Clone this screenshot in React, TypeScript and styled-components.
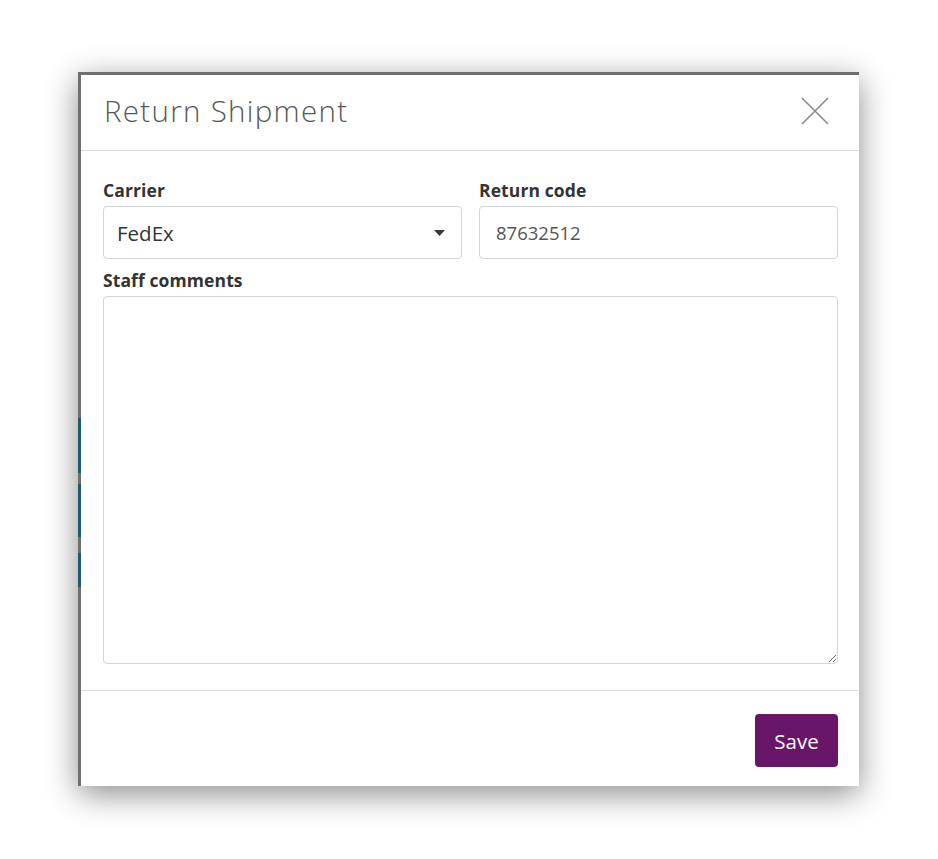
import React from "react";
import styled, { createGlobalStyle } from "styled-components";

const GlobalStyle = createGlobalStyle`
  html, body { margin: 0; padding: 0; background: #ffffff; }
  body { font-family: "Open Sans", "Noto Sans", sans-serif; }
  * { box-sizing: border-box; }
`;

const Page = styled.div`
  padding: 72px 0 0 78px;
  min-height: 859px;
`;

const Frame = styled.div`
  width: 781px;
  height: 714px;
  padding: 3px 0 0 3px;
  display: flex;
  background: linear-gradient(
    to bottom,
    #6f6f6f 0px,
    #6f6f6f 346px,
    #1d5d69 346px,
    #1d5d69 401px,
    #6f6f6f 401px,
    #6f6f6f 412px,
    #1d5d69 412px,
    #1d5d69 465px,
    #6f6f6f 465px,
    #6f6f6f 481px,
    #1d5d69 481px,
    #1d5d69 515px,
    #6f6f6f 515px
  );
  box-shadow: 0 8px 30px rgba(0, 0, 0, 0.45);
`;

const Modal = styled.div`
  flex: 1;
  background: #ffffff;
  display: flex;
  flex-direction: column;
`;

const Header = styled.div`
  height: 76px;
  flex: none;
  display: flex;
  align-items: center;
  justify-content: space-between;
  padding: 0 30px 0 23px;
  border-bottom: 1px solid #dcdcdc;
`;

const Title = styled.h2`
  margin: 0;
  font-family: "Open Sans", sans-serif;
  font-weight: 300;
  font-size: 29.5px;
  letter-spacing: 1.3px;
  color: #585858;
  line-height: 1;
  padding-bottom: 3px;
`;

const CloseButton = styled.button`
  border: 0;
  background: transparent;
  padding: 0;
  width: 28px;
  height: 28px;
  display: flex;
  align-items: center;
  justify-content: center;
  margin-bottom: 3px;
  cursor: pointer;
`;

const Body = styled.div`
  flex: 1;
  display: flex;
  flex-direction: column;
  padding: 27px 21px 26px 22px;
`;

const Row = styled.div`
  display: grid;
  grid-template-columns: 1fr 1fr;
  column-gap: 17px;
`;

const Field = styled.div<{ $grow?: boolean }>`
  display: flex;
  flex-direction: column;
  gap: 4px;
  ${(p) => (p.$grow ? "flex: 1; margin-top: 9px;" : "")}
`;

const Label = styled.label`
  font-family: "Open Sans", sans-serif;
  font-weight: 700;
  font-size: 17.5px;
  line-height: 24px;
  color: #333333;
  letter-spacing: 0.1px;
`;

const SelectBox = styled.div`
  height: 53px;
  border: 1px solid #d3d6da;
  border-radius: 4px;
  display: flex;
  align-items: center;
  justify-content: space-between;
  padding: 0 16px 0 13px;
  font-size: 20.5px;
  color: #333333;
`;

const TextInput = styled.input`
  height: 53px;
  border: 1px solid #d3d6da;
  border-radius: 4px;
  padding: 0 16px;
  font-family: "Open Sans", sans-serif;
  font-size: 18.5px;
  color: #555555;
  outline: none;
`;

const TextArea = styled.textarea`
  flex: 1;
  width: 100%;
  border: 1px solid #d3d6da;
  border-radius: 4px;
  font-family: "Open Sans", sans-serif;
  font-size: 18px;
  resize: vertical;
  outline: none;
`;

const Footer = styled.div`
  flex: none;
  border-top: 1px solid #dcdcdc;
  display: flex;
  justify-content: flex-end;
  padding: 23px 21px 19px 22px;
`;

const SaveButton = styled.button`
  height: 53px;
  width: 83px;
  border: 0;
  border-radius: 4px;
  background: #6a1668;
  color: #ffffff;
  font-family: "Open Sans", sans-serif;
  font-size: 20.5px;
  cursor: pointer;
`;

export default function App() {
  return (
    <>
      <GlobalStyle />
      <Page>
        <Frame>
          <Modal>
            <Header>
              <Title>Return Shipment</Title>
              <CloseButton aria-label="Close">
                <svg width="28" height="28" viewBox="0 0 28 28">
                  <path
                    d="M1 1 L27 27 M27 1 L1 27"
                    stroke="#8a8a8a"
                    strokeWidth="1.6"
                    fill="none"
                  />
                </svg>
              </CloseButton>
            </Header>
            <Body>
              <Row>
                <Field>
                  <Label>Carrier</Label>
                  <SelectBox>
                    <span>FedEx</span>
                    <svg width="11" height="6" viewBox="0 0 11 6">
                      <path d="M0 0 H11 L5.5 6 Z" fill="#3a3a3a" />
                    </svg>
                  </SelectBox>
                </Field>
                <Field>
                  <Label>Return code</Label>
                  <TextInput defaultValue="87632512" />
                </Field>
              </Row>
              <Field $grow>
                <Label>Staff comments</Label>
                <TextArea />
              </Field>
            </Body>
            <Footer>
              <SaveButton>Save</SaveButton>
            </Footer>
          </Modal>
        </Frame>
      </Page>
    </>
  );
}
